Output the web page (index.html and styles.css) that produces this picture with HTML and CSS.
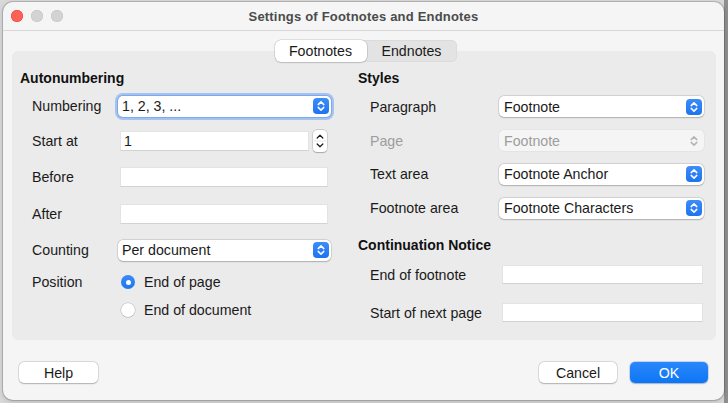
FILE: index.html
```html
<!DOCTYPE html>
<html lang="en">
<head>
<meta charset="utf-8">
<title>Settings of Footnotes and Endnotes</title>
<link rel="stylesheet" href="styles.css">
</head>
<body>
<div class="window">
  <div class="titlebar">
    <div class="lights">
      <span class="light red"></span>
      <span class="light"></span>
      <span class="light"></span>
    </div>
    <div class="title">Settings of Footnotes and Endnotes</div>
    <div></div>
  </div>
  <div class="content">
    <div class="tabs">
      <span class="tab active">Footnotes</span>
      <span class="tab">Endnotes</span>
    </div>
    <div class="panel">
      <div class="form left">
        <div class="heading">Autonumbering</div>

        <div class="label">Numbering</div>
        <div class="select focused"><span>1, 2, 3, ...</span><span class="arrows"><svg viewBox="0 0 16 16"><path d="M5.2 6.6 8 3.9 10.8 6.6M5.2 9.4 8 12.1 10.8 9.4"/></svg></span></div>

        <div class="label">Start at</div>
        <div class="spin">
          <div class="field short">1</div>
          <div class="stepper"><svg viewBox="0 0 14 22"><path d="M4.2 8 7 5.2 9.8 8M4.2 14 7 16.8 9.8 14"/><path class="divider" d="M1 11H13"/></svg></div>
        </div>

        <div class="label">Before</div>
        <div class="field"></div>

        <div class="label">After</div>
        <div class="field"></div>

        <div class="label">Counting</div>
        <div class="select"><span>Per document</span><span class="arrows"><svg viewBox="0 0 16 16"><path d="M5.2 6.6 8 3.9 10.8 6.6M5.2 9.4 8 12.1 10.8 9.4"/></svg></span></div>

        <div class="label">Position</div>
        <div class="radio-row"><span class="radio checked"></span><span>End of page</span></div>

        <div class="label"></div>
        <div class="radio-row"><span class="radio"></span><span>End of document</span></div>
      </div>

      <div class="form right">
        <div class="heading">Styles</div>

        <div class="label">Paragraph</div>
        <div class="select"><span>Footnote</span><span class="arrows"><svg viewBox="0 0 16 16"><path d="M5.2 6.6 8 3.9 10.8 6.6M5.2 9.4 8 12.1 10.8 9.4"/></svg></span></div>

        <div class="label disabled">Page</div>
        <div class="select disabled"><span>Footnote</span><span class="arrows"><svg viewBox="0 0 16 16"><path d="M5.2 6.6 8 3.9 10.8 6.6M5.2 9.4 8 12.1 10.8 9.4"/></svg></span></div>

        <div class="label">Text area</div>
        <div class="select"><span>Footnote Anchor</span><span class="arrows"><svg viewBox="0 0 16 16"><path d="M5.2 6.6 8 3.9 10.8 6.6M5.2 9.4 8 12.1 10.8 9.4"/></svg></span></div>

        <div class="label">Footnote area</div>
        <div class="select"><span>Footnote Characters</span><span class="arrows"><svg viewBox="0 0 16 16"><path d="M5.2 6.6 8 3.9 10.8 6.6M5.2 9.4 8 12.1 10.8 9.4"/></svg></span></div>

        <div class="heading">Continuation Notice</div>

        <div class="label">End of footnote</div>
        <div class="field"></div>

        <div class="label">Start of next page</div>
        <div class="field"></div>
      </div>
    </div>
    <div class="buttons">
      <button class="btn">Help</button>
      <div class="btn-group">
        <button class="btn">Cancel</button>
        <button class="btn primary">OK</button>
      </div>
    </div>
  </div>
</div>
</body>
</html>
```

FILE: styles.css
```css
* { box-sizing: border-box; }

html, body { height: 100%; }

body {
  margin: 0;
  background: linear-gradient(to right, #d9d9d9 0, #d9d9d9 724px, #8f8f8f 724px);
  font-family: "Liberation Sans", Arial, sans-serif;
  font-size: 14.2px;
  color: #1a1a1a;
  overflow: hidden;
}

.window {
  margin: 2px 0 0 3px;
  width: 721px;
  height: 398px;
  background: #f5f5f5;
  border-radius: 10px;
  box-shadow: 0 0 0 1px rgba(0, 0, 0, 0.16), 0 2px 6px rgba(0, 0, 0, 0.15);
  overflow: hidden;
}

.titlebar {
  height: 29px;
  border-bottom: 1px solid #d8d8d8;
  display: grid;
  grid-template-columns: 1fr auto 1fr;
  align-items: center;
}

.lights {
  display: flex;
  gap: 8px;
  padding-left: 8px;
}

.light {
  width: 12px;
  height: 12px;
  border-radius: 50%;
  background: #d3d3d3;
  box-shadow: inset 0 0 0 0.5px #c2c2c2;
}

.light.red {
  background: #fe5f57;
  box-shadow: inset 0 0 0 0.5px #e0443e;
}

.title {
  font-size: 13px;
  font-weight: bold;
  color: #4b4b4b;
  letter-spacing: 0.2px;
}

.content {
  padding: 9px 8px 0 9px;
  display: flex;
  flex-direction: column;
}

.tabs {
  align-self: center;
  margin-left: 3px;
  display: flex;
  height: 22px;
  background: #e3e3e3;
  border-radius: 6px;
  box-shadow: inset 0 0 0 0.5px #d4d4d4;
  margin-bottom: -11px;
  position: relative;
  z-index: 1;
}

.tab {
  display: flex;
  align-items: center;
  justify-content: center;
  width: 90px;
  height: 22px;
  color: #1a1a1a;
}

.tab.active {
  width: 92px;
  background: #fff;
  border-radius: 6px;
  box-shadow: 0 0 0 0.5px rgba(0, 0, 0, 0.18), 0 1px 1.5px rgba(0, 0, 0, 0.12);
}

.panel {
  height: 289px;
  background: #ebebeb;
  border-radius: 6px;
  padding: 13px 12px 0 8px;
  display: grid;
  grid-template-columns: 338px 1fr;
  align-items: start;
}

.form {
  display: grid;
  align-items: center;
}

.form.left {
  grid-template-columns: 98px 213px;
  grid-template-rows: 28px 28px 41px 32px 42px 30px 34px 22px;
}

.form.right {
  grid-template-columns: 140px 206px;
  grid-template-rows: 28px 29px 39px 28px 40px 34px 25px 51px;
}

.heading {
  grid-column: 1 / -1;
  font-weight: bold;
  font-size: 14px;
  color: #111;
}

.label {
  padding-left: 12px;
  white-space: nowrap;
}

.label.disabled { color: #9d9d9d; }

.select {
  height: 21px;
  background: #fff;
  border-radius: 5px;
  box-shadow: 0 0 0 0.5px rgba(0, 0, 0, 0.15), 0 0.5px 1.5px rgba(0, 0, 0, 0.2);
  display: flex;
  align-items: center;
  justify-content: space-between;
  padding: 0 2px 0 4px;
  white-space: nowrap;
}

.form.right .select { padding-left: 5px; margin-left: 1px; }

.select.focused {
  box-shadow: 0 0 0 1px #7aa9ee, 0 0 0 3px rgba(110, 160, 240, 0.55);
}

.arrows {
  width: 16px;
  height: 16px;
  border-radius: 4px;
  background: linear-gradient(#3d8df8, #1e74f0);
  display: flex;
}

.arrows svg {
  width: 16px;
  height: 16px;
  fill: none;
  stroke: #fff;
  stroke-width: 1.5;
  stroke-linecap: round;
  stroke-linejoin: round;
}

.select.disabled {
  background: #f5f5f5;
  color: #9d9d9d;
  box-shadow: 0 0 0 0.5px rgba(0, 0, 0, 0.06);
}

.select.disabled .arrows { background: transparent; }
.select.disabled .arrows svg { stroke: #b4b4b4; }

.field {
  height: 20px;
  background: #fff;
  border: 1px solid #e3e3e3;
  border-bottom-color: #d2d2d2;
  margin: 0 3px 0 2px;
  padding: 0 3px;
  display: flex;
  align-items: center;
}

.form.right .field { margin: 0 1px 0 4px; height: 19px; }

.spin {
  display: flex;
  align-items: center;
  gap: 4px;
  margin-left: 2px;
}

.field.short {
  width: 189px;
  margin: 0;
}

.stepper {
  width: 14px;
  height: 22px;
  background: #fff;
  border-radius: 4px;
  box-shadow: 0 0 0 0.5px rgba(0, 0, 0, 0.2), 0 0.5px 1px rgba(0, 0, 0, 0.2);
  display: flex;
}

.stepper svg {
  width: 14px;
  height: 22px;
  fill: none;
  stroke: #222;
  stroke-width: 1.3;
  stroke-linecap: round;
  stroke-linejoin: round;
}

.stepper svg .divider {
  stroke: #e6e6e6;
  stroke-width: 1;
}

.radio-row {
  display: flex;
  align-items: center;
  gap: 9px;
  padding-left: 3px;
}

.radio {
  width: 14px;
  height: 14px;
  border-radius: 50%;
  background: #fff;
  box-shadow: 0 0 0 0.5px rgba(0, 0, 0, 0.2), 0 0.5px 1px rgba(0, 0, 0, 0.15);
  display: flex;
  align-items: center;
  justify-content: center;
}

.radio.checked {
  background: linear-gradient(#3a8bf8, #1f75f0);
  box-shadow: none;
}

.radio.checked::after {
  content: "";
  width: 5px;
  height: 5px;
  border-radius: 50%;
  background: #fff;
}

.buttons {
  margin: 22px 8px 0 7px;
  display: flex;
  justify-content: space-between;
}

.btn-group {
  display: flex;
  gap: 13px;
}

.btn {
  font-family: "Liberation Sans", Arial, sans-serif;
  font-size: 14.2px;
  color: #1a1a1a;
  width: 79px;
  height: 21px;
  padding: 0;
  border: none;
  border-radius: 5px;
  background: #fff;
  box-shadow: 0 0 0 0.5px rgba(0, 0, 0, 0.15), 0 0.5px 1.5px rgba(0, 0, 0, 0.22);
}

.btn-group .btn { width: 78px; }

.btn.primary {
  color: #fff;
  background: linear-gradient(#2b87fa, #0d76f5);
  box-shadow: 0 0 0 0.5px rgba(0, 80, 200, 0.3), 0 0.5px 1.5px rgba(0, 0, 0, 0.2);
}
```
